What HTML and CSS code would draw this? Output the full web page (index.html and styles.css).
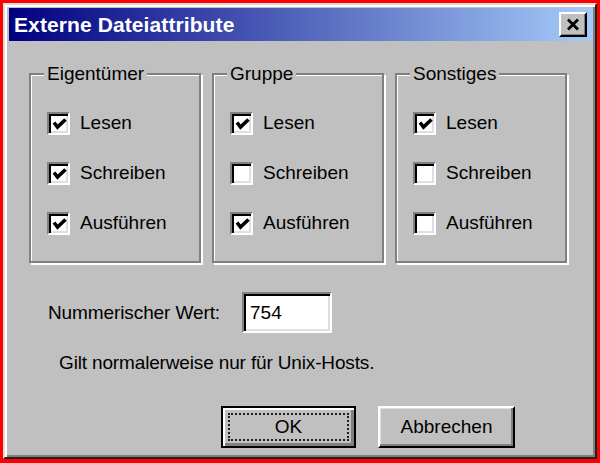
FILE: index.html
```html
<!DOCTYPE html>
<html lang="de">
<head>
<meta charset="utf-8">
<title>Externe Dateiattribute</title>
<link rel="stylesheet" href="styles.css">
</head>
<body>
<div class="dialog">
  <div class="titlebar">
    <span class="title">Externe Dateiattribute</span>
    <span class="close">
      <svg width="14" height="13" viewBox="0 0 14 13"><path d="M2 1.5 L12 11.5 M12 1.5 L2 11.5" stroke="#000" stroke-width="2.8" fill="none"/></svg>
    </span>
  </div>
  <div class="content">
    <div class="groups">
      <div class="group">
        <span class="legend">Eigentümer</span>
        <div class="opt"><span class="cb on"><svg viewBox="0 0 15 15"><path d="M2 5.5 L5.5 10 L13.5 2.5" stroke="#000" stroke-width="3.6" fill="none"/></svg></span>Lesen</div>
        <div class="opt"><span class="cb on"><svg viewBox="0 0 15 15"><path d="M2 5.5 L5.5 10 L13.5 2.5" stroke="#000" stroke-width="3.6" fill="none"/></svg></span>Schreiben</div>
        <div class="opt"><span class="cb on"><svg viewBox="0 0 15 15"><path d="M2 5.5 L5.5 10 L13.5 2.5" stroke="#000" stroke-width="3.6" fill="none"/></svg></span>Ausführen</div>
      </div>
      <div class="group">
        <span class="legend">Gruppe</span>
        <div class="opt"><span class="cb on"><svg viewBox="0 0 15 15"><path d="M2 5.5 L5.5 10 L13.5 2.5" stroke="#000" stroke-width="3.6" fill="none"/></svg></span>Lesen</div>
        <div class="opt"><span class="cb"></span>Schreiben</div>
        <div class="opt"><span class="cb on"><svg viewBox="0 0 15 15"><path d="M2 5.5 L5.5 10 L13.5 2.5" stroke="#000" stroke-width="3.6" fill="none"/></svg></span>Ausführen</div>
      </div>
      <div class="group">
        <span class="legend">Sonstiges</span>
        <div class="opt"><span class="cb on"><svg viewBox="0 0 15 15"><path d="M2 5.5 L5.5 10 L13.5 2.5" stroke="#000" stroke-width="3.6" fill="none"/></svg></span>Lesen</div>
        <div class="opt"><span class="cb"></span>Schreiben</div>
        <div class="opt"><span class="cb"></span>Ausführen</div>
      </div>
    </div>
    <div class="numrow">
      <span class="numlabel">Nummerischer Wert:</span>
      <span class="input">754</span>
    </div>
    <div class="note">Gilt normalerweise nur für Unix-Hosts.</div>
    <div class="buttons">
      <span class="btn default">OK</span>
      <span class="btn">Abbrechen</span>
    </div>
  </div>
</div>
</body>
</html>
```
FILE: styles.css
```css
html, body {
  margin: 0;
  padding: 0;
  background: #ff0000;
}
body {
  width: 600px;
  height: 463px;
  padding: 3px 3px 4px 3px;
  box-sizing: border-box;
  font-family: "Liberation Sans", Arial, sans-serif;
  font-size: 19px;
  color: #000;
}
.dialog {
  width: 594px;
  height: 456px;
  box-sizing: border-box;
  background: #c0c0c0;
  border: 2px solid;
  border-color: #dfdfdf #202020 #202020 #dfdfdf;
  box-shadow: inset 2px 2px 0 #fff, inset -2px -2px 0 #808080;
  padding: 3px 2px 0 4px;
  display: flex;
  flex-direction: column;
}
.titlebar {
  height: 33px;
  flex: none;
  background: linear-gradient(to right, #000080 0%, #a6cbf8 100%);
  display: flex;
  align-items: center;
  justify-content: space-between;
  padding: 0 6px 0 5px;
}
.title {
  color: #fff;
  font-weight: bold;
  font-size: 21px;
  letter-spacing: 0.1px;
}
.close {
  width: 28px;
  height: 25px;
  box-sizing: border-box;
  background: #c0c0c0;
  border: 2px solid;
  border-color: #fff #000 #000 #fff;
  box-shadow: inset -1px -1px 0 #808080;
  display: flex;
  align-items: center;
  justify-content: center;
}
.content {
  display: flex;
  flex-direction: column;
  padding-left: 20px;
}
.groups {
  display: flex;
  gap: 11px;
  margin-top: 32px;
}
.group {
  position: relative;
  width: 172px;
  height: 190px;
  box-sizing: border-box;
  border: 2px solid #808080;
  box-shadow: inset 1px 1px 0 #fff, 2px 2px 0 #fff;
  padding: 23px 0 0 16px;
}
.legend {
  position: absolute;
  top: -12px;
  left: 13px;
  line-height: 22px;
  padding: 0 3px;
  background: #c0c0c0;
}
.opt {
  display: flex;
  align-items: center;
  height: 50px;
}
.cb {
  width: 23px;
  height: 23px;
  box-sizing: border-box;
  flex: none;
  background: #fff;
  border: 2px solid;
  border-color: #808080 #fff #fff #808080;
  box-shadow: inset 2px 2px 0 #000, inset -2px -2px 0 #dfdfdf;
  margin-right: 10px;
  display: flex;
  align-items: center;
  justify-content: center;
  padding: 2px 0 0 1px;
}
.cb svg {
  width: 15px;
  height: 15px;
  display: block;
}
.numrow {
  display: flex;
  align-items: center;
  margin-top: 29px;
  padding-left: 19px;
}
.numlabel {
  width: 194px;
  letter-spacing: -0.1px;
}
.input {
  width: 90px;
  height: 41px;
  box-sizing: border-box;
  background: #fff;
  border: 2px solid;
  border-color: #808080 #fff #fff #808080;
  box-shadow: inset 2px 2px 0 #000, inset -2px -2px 0 #dfdfdf;
  padding: 0 0 0 6px;
  display: flex;
  align-items: center;
}
.note {
  margin-top: 19px;
  padding-left: 30px;
  line-height: 22px;
  letter-spacing: -0.15px;
}
.buttons {
  display: flex;
  gap: 22px;
  margin-top: 32px;
  padding-left: 192px;
}
.btn {
  position: relative;
  width: 137px;
  height: 42px;
  box-sizing: border-box;
  background: #c0c0c0;
  border: 2px solid;
  border-color: #fff #000 #000 #fff;
  box-shadow: inset -2px -2px 0 #808080, inset 1px 1px 0 #dfdfdf;
  display: flex;
  align-items: center;
  justify-content: center;
}
.btn.default {
  width: 135px;
  border: 2px solid #000;
  box-shadow: inset 2px 2px 0 #fff, inset -3px -3px 0 #808080;
}
.btn.default::after {
  content: "";
  position: absolute;
  top: 5px;
  left: 5px;
  right: 5px;
  bottom: 5px;
  border: 2px dotted #202020;
}
```
